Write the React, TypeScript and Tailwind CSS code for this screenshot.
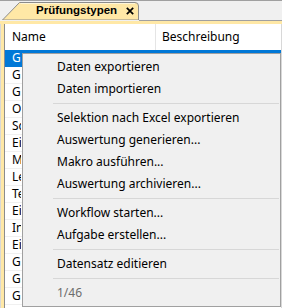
import React from "react";

const rows = ["G", "G", "G", "O", "Sc", "Ei", "M", "Le", "Te", "Ei", "In", "Ei", "G", "Ga", "G"];

type Item = { label: string; sep?: boolean; disabled?: boolean };

const menu: Item[] = [
  { label: "Daten exportieren" },
  { label: "Daten importieren" },
  { label: "", sep: true },
  { label: "Selektion nach Excel exportieren" },
  { label: "Auswertung generieren..." },
  { label: "Makro ausführen..." },
  { label: "Auswertung archivieren..." },
  { label: "", sep: true },
  { label: "Workflow starten..." },
  { label: "Aufgabe erstellen..." },
  { label: "", sep: true },
  { label: "Datensatz editieren" },
  { label: "", sep: true },
  { label: "1/46", disabled: true },
];

export default function App() {
  return (
    <div
      className="relative w-[282px] h-[308px] overflow-hidden bg-[#f0f0f0] text-[12px] text-black"
      style={{ fontFamily: '"Noto Sans", "Liberation Sans", sans-serif' }}
    >
      {/* tab strip */}
      <div className="h-[20px] border-t border-[#a0a0a0] flex items-end pl-[2px]">
        <div className="relative w-[137px] h-[19px] flex items-center">
          <svg
            className="absolute inset-0"
            width="137"
            height="19"
            viewBox="0 0 137 19"
          >
            <path
              d="M0.5 19 L17.5 1.5 L133 1.5 Q136.5 1.5 136.5 5 L136.5 19 Z"
              fill="#ffe8a6"
              stroke="#8c8c8c"
              strokeWidth="1"
            />
            <path d="M18.5 2.5 L133 2.5" stroke="#fff6d8" strokeWidth="1" />
          </svg>
          <span
            className="relative ml-[34px] w-[90px] font-bold text-[11.5px] whitespace-nowrap"
            style={{ fontFamily: '"Liberation Sans", Arial, sans-serif' }}
          >
            Prüfungstypen
          </span>
          <svg
            className="relative"
            width="8"
            height="8"
            viewBox="0 0 8 8"
          >
            <path
              d="M0.8 0.8 L7.2 7.2 M7.2 0.8 L0.8 7.2"
              stroke="#000"
              strokeWidth="1.7"
            />
          </svg>
        </div>
      </div>

      {/* frame */}
      <div className="h-[288px] flex flex-col">
        <div className="h-[1px] ml-[139px] bg-[#a0a0a0]" />
        <div className="h-[3px] bg-[#ffe8a6]" />
        <div className="flex-1 flex">
          <div className="w-[5px] bg-[#ffe8a6] border-r border-[#8c8c8c] border-l border-l-[#d8d8d8]" />
          <div className="flex-1 bg-white border-r border-[#d8d8d8] flex flex-col">
            <div className="h-[26px] flex items-center shrink-0">
              <div className="w-[151px] pl-[7px] border-r border-[#e5e5e5] h-full flex items-center">
                Name
              </div>
              <div className="pl-[6px]">Beschreibung</div>
            </div>
            {rows.map((r, i) => (
              <div
                key={i}
                className={
                  "h-[17px] shrink-0 flex items-center border-b " +
                  (i === 0
                    ? "bg-[#0078d7] text-white border-[#0078d7]"
                    : "border-[#f0f0f0]")
                }
              >
                <div className="w-[16px] pl-[7px] whitespace-nowrap overflow-hidden">
                  {r}
                </div>
              </div>
            ))}
          </div>
        </div>
      </div>

      {/* context menu */}
      <div className="absolute left-[22px] top-[53px] w-[259px] h-[254px] bg-[#f0f0f0] border border-[#a0a0a0] py-[2px] flex flex-col">
        {menu.map((m, i) =>
          m.sep ? (
            <div key={i} className="h-[7px] flex items-center pl-[30px] pr-[1px]">
              <div className="h-[1px] w-full bg-[#d7d7d7]" />
            </div>
          ) : (
            <div
              key={i}
              className={
                "h-[22px] flex items-center pl-[34px] whitespace-nowrap " +
                (m.disabled ? "text-[#6d6d6d]" : "text-black")
              }
            >
              {m.label}
            </div>
          )
        )}
      </div>
    </div>
  );
}
